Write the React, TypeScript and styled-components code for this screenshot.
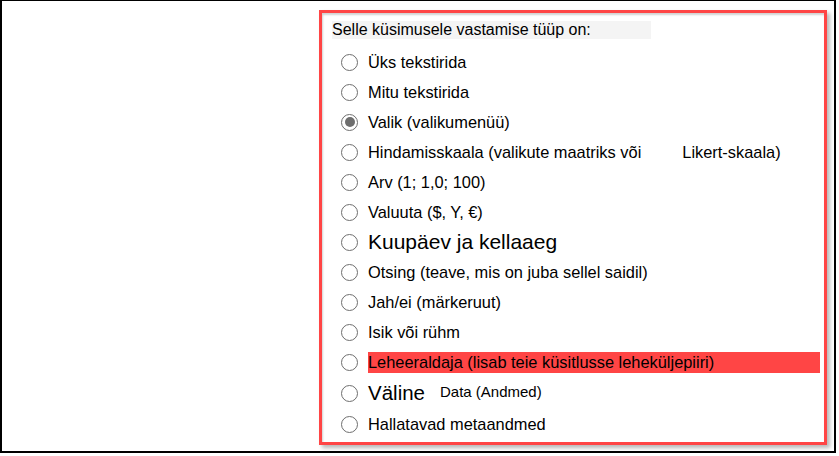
import React from 'react'
import styled, { createGlobalStyle } from 'styled-components'

// Types
type Option = { label: React.ReactNode; checked?: boolean; highlight?: boolean; tall?: boolean }

const GlobalStyle = createGlobalStyle`
  html, body {
    margin: 0;
    padding: 0;
    background: #ffffff;
  }

  body {
    font-family: 'Liberation Sans', Arial, sans-serif;
    color: #000000;
  }
`

const Frame = styled.div`
  box-sizing: border-box;
  width: 836px;
  height: 453px;
  border: 2px solid #000000;
  border-top-width: 1px;
  padding: 9px 0 0 317px;
`

const Panel = styled.section`
  box-sizing: border-box;
  width: 508px;
  height: 435px;
  border: 3px solid #ff4545;
  box-shadow: 3px 3px 4px rgba(0, 0, 0, 0.28), inset 1px 2px 2px rgba(0, 0, 0, 0.18);
  padding: 8px 0 0 10px;
  background: #ffffff;
`

const Heading = styled.div`
  width: 319px;
  height: 18px;
  line-height: 18px;
  font-size: 16px;
  background: #f4f4f4;
`

const List = styled.ul`
  list-style: none;
  margin: 8px 0 0;
  padding: 0;
`

const Row = styled.li<{ $tall?: boolean }>`
  display: flex;
  align-items: center;
  height: ${(p) => (p.$tall ? '32px' : '30px')};
  padding-left: 9px;
  font-size: 16.4px;
`

const Radio = styled.span<{ $checked?: boolean }>`
  box-sizing: border-box;
  flex: none;
  width: 17px;
  height: 17px;
  border: 1.6px solid #6e6e6e;
  border-radius: 50%;
  margin-right: 10px;
  display: flex;
  align-items: center;
  justify-content: center;

  &::after {
    content: '';
    display: ${(p) => (p.$checked ? 'block' : 'none')};
    width: 10px;
    height: 10px;
    border-radius: 50%;
    background: #6e6e6e;
  }
`

const Label = styled.span<{ $highlight?: boolean }>`
  display: flex;
  align-items: center;
  height: 21px;
  white-space: nowrap;
  width: ${(p) => (p.$highlight ? '452px' : 'auto')};
  background: ${(p) => (p.$highlight ? '#ff4545' : 'transparent')};
`

const Spacer = styled.span`
  display: inline-block;
  width: 41px;
`

const Big = styled.span<{ $size: number }>`
  font-size: ${(p) => p.$size}px;
`

const Small = styled.span`
  font-size: 15px;
  margin-left: 15px;
  position: relative;
  top: -2px;
`

const options: Option[] = [
  { label: 'Üks tekstirida' },
  { label: 'Mitu tekstirida' },
  { label: 'Valik (valikumenüü)', checked: true },
  {
    label: (
      <>
        Hindamisskaala (valikute maatriks või<Spacer />Likert-skaala)
      </>
    ),
  },
  { label: 'Arv (1; 1,0; 100)' },
  { label: 'Valuuta ($, Y, €)' },
  { label: <Big $size={21}>Kuupäev ja kellaaeg</Big> },
  { label: 'Otsing (teave, mis on juba sellel saidil)' },
  { label: 'Jah/ei (märkeruut)' },
  { label: 'Isik või rühm' },
  { label: 'Leheeraldaja (lisab teie küsitlusse leheküljepiiri)', highlight: true },
  {
    label: (
      <>
        <Big $size={20.5}>Väline</Big>
        <Small>Data (Andmed)</Small>
      </>
    ),
    tall: true,
  },
  { label: 'Hallatavad metaandmed' },
]

export default function App(): JSX.Element {
  return (
    <>
      <GlobalStyle />
      <Frame>
        <Panel>
          <Heading>Selle küsimusele vastamise tüüp on:</Heading>

          <List>
            {options.map((o, i) => (
              <Row key={i} $tall={o.tall}>
                <Radio $checked={o.checked} />
                <Label $highlight={o.highlight}>{o.label}</Label>
              </Row>
            ))}
          </List>
        </Panel>
      </Frame>
    </>
  )
}
